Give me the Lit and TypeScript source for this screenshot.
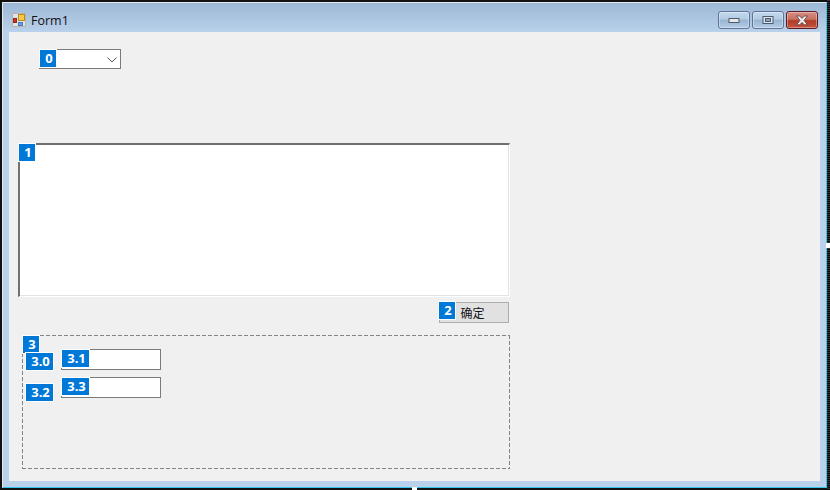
import { LitElement, html, css } from "lit";
import { customElement } from "lit/decorators.js";

@customElement("app-badge")
export class Badge extends LitElement {
  static styles = css`
    :host {
      position: absolute;
      box-sizing: border-box;
      display: flex;
      align-items: center;
      justify-content: center;
      height: 19px;
      min-width: 18px;
      padding-left: 2px;
      background: #0078d7;
      border: 1px solid #fff;
      color: #fff;
      font: 700 13px "Open Sans", "Noto Sans", sans-serif;
      line-height: 1;
      z-index: 2;
    }
  `;

  render() {
    return html`<slot></slot>`;
  }
}

@customElement("app-root")
export class AppRoot extends LitElement {
  static styles = css`
    :host {
      display: block;
      position: relative;
      width: 830px;
      height: 490px;
      overflow: hidden;
      background: #111;
      font-family: "Open Sans", "Noto Sans", sans-serif;
    }

    .window {
      box-sizing: border-box;
      width: 825px;
      height: 486px;
      margin: 2px 0 0 2px;
      display: flex;
      flex-direction: column;
      background: #b9d1ea;
      border-top: 1px solid #e4e9ee;
      border-left: 1px solid #e4e9ee;
      border-right: 1px solid #35c6ee;
      border-bottom: 1px solid #35c6ee;
    }

    .titlebar {
      height: 29px;
      flex: none;
      box-sizing: border-box;
      display: flex;
      align-items: center;
      padding: 0 8px 0 9px;
      background: linear-gradient(#9db8d5, #b9d1ea);
    }

    .titlebar svg.app {
      flex: none;
      margin: 5px 5px 0 0;
    }

    .title {
      flex: 1;
      font-size: 12.5px;
      color: #111;
      margin-top: 5px;
    }

    .controls {
      display: flex;
      gap: 2px;
      margin-top: 5px;
    }

    .caption {
      box-sizing: border-box;
      width: 32px;
      height: 18px;
      display: flex;
      align-items: center;
      justify-content: center;
      border: 1px solid #5f7396;
      border-radius: 3px;
      background: linear-gradient(#c5d8ec 0%, #b3cbe4 45%, #98b4d2 50%, #b4cde6 100%);
      box-shadow: inset 0 0 0 1px rgba(255, 255, 255, 0.35);
    }

    .caption.close {
      border-color: #5b1a26;
      background: linear-gradient(#d78f82 0%, #c8705f 45%, #b13a26 55%, #c4563f 100%);
    }

    .client {
      box-sizing: border-box;
      width: 811px;
      height: 449px;
      margin-left: 6px;
      background: #f0f0f0;
      display: flex;
      flex-direction: column;
      align-items: flex-start;
      padding-top: 17px;
    }

    .combo {
      position: relative;
      box-sizing: border-box;
      width: 82px;
      height: 20px;
      margin-left: 30px;
      background: #fff;
      border: 1px solid #7a7a7a;
      display: flex;
      align-items: center;
      justify-content: flex-end;
      padding-right: 3px;
    }

    .combo app-badge {
      left: -1px;
      top: -1px;
    }

    .rich {
      position: relative;
      box-sizing: border-box;
      width: 492px;
      height: 154px;
      margin: 74px 0 0 9px;
      background: #fff;
      border-top: 2px solid #707070;
      border-left: 2px solid #707070;
      border-right: 1px solid #fff;
      border-bottom: 1px solid #fff;
      box-shadow: inset -1px -1px 0 #e3e3e3;
    }

    .rich app-badge {
      left: -2px;
      top: -2px;
    }

    .button {
      position: relative;
      box-sizing: border-box;
      width: 70px;
      height: 21px;
      margin: 5px 0 0 430px;
      background: #e1e1e1;
      border: 1px solid #adadad;
      display: flex;
      align-items: center;
      justify-content: center;
      font: 12px "Noto Sans CJK SC", sans-serif;
      color: #111;
    }

    .button span {
      margin-left: -3px;
    }

    .button app-badge {
      left: -2px;
      top: -2px;
    }

    .group {
      position: relative;
      box-sizing: border-box;
      width: 488px;
      height: 134px;
      margin: 12px 0 0 13px;
      padding: 14px 0 0 39px;
      display: flex;
      flex-direction: column;
      gap: 7px;
      background:
        repeating-linear-gradient(90deg, #858585 0 4px, transparent 4px 6px) top / 100% 1px no-repeat,
        repeating-linear-gradient(90deg, #858585 0 4px, transparent 4px 6px) bottom / 100% 1px no-repeat,
        repeating-linear-gradient(180deg, #858585 0 4px, transparent 4px 6px) left / 1px 100% no-repeat,
        repeating-linear-gradient(180deg, #858585 0 4px, transparent 4px 6px) right / 1px 100% no-repeat;
    }

    .group > app-badge {
      left: 0;
      top: 0;
    }

    .group > app-badge.b30 {
      left: 3px;
      top: 17px;
    }

    .group > app-badge.b32 {
      left: 3px;
      top: 48px;
    }

    .textbox {
      position: relative;
      box-sizing: border-box;
      width: 100px;
      height: 21px;
      background: #fff;
      border: 1px solid #7a7a7a;
    }

    .textbox app-badge {
      left: -1px;
      top: -1px;
    }

    .wide {
      min-width: 29px;
    }

    .edge {
      position: absolute;
      top: 0;
      bottom: 0;
      right: 0;
      width: 3px;
      background: repeating-linear-gradient(180deg, #333 0 1px, #0a0a0a 1px 2px);
    }

    .handle {
      position: absolute;
      background: #fff;
    }

    .handle.r {
      right: 0;
      top: 243px;
      width: 4px;
      height: 5px;
    }

    .handle.b {
      left: 412px;
      bottom: 0;
      width: 5px;
      height: 3px;
    }
  `;

  render() {
    return html`
      <div class="window">
        <div class="titlebar">
          <svg class="app" width="14" height="14" viewBox="0 0 14 14">
            <rect x="0.5" y="0.5" width="13" height="13" fill="#dfe3e6" stroke="#b9b3aa" />
            <rect x="6.5" y="1.5" width="6" height="6" fill="#f4cb45" stroke="#b98a1e" />
            <rect x="1.5" y="5.5" width="3" height="4" fill="#d0322a" stroke="#8a2a24" />
            <rect x="6.5" y="9.5" width="4" height="3" fill="#6aa0e4" stroke="#4a78bc" />
          </svg>
          <span class="title">Form1</span>
          <div class="controls">
            <div class="caption">
              <svg width="12" height="7" viewBox="0 0 12 7">
                <rect x="1" y="1.5" width="10" height="4" fill="#e8e8e8" stroke="#4f5b6e" />
              </svg>
            </div>
            <div class="caption">
              <svg width="12" height="8" viewBox="0 0 12 8">
                <rect x="1" y="0.5" width="10" height="7" fill="#dfe6ee" stroke="#4f5b6e" />
                <rect x="3.5" y="2.5" width="5" height="3" fill="#8aa6c4" stroke="#4f5b6e" />
              </svg>
            </div>
            <div class="caption close">
              <svg width="14" height="11" viewBox="0 0 14 11">
                <path
                  d="M1.5 1h3.2L7 3.4 9.3 1h3.2L9 5.4l3.5 4.4H9.3L7 7.4 4.7 9.8H1.5L5 5.4z"
                  fill="#eeeeee"
                  stroke="#5a3a3a"
                  stroke-width="0.8"
                />
              </svg>
            </div>
          </div>
        </div>
        <div class="client">
          <div class="combo">
            <app-badge>0</app-badge>
            <svg width="10" height="7" viewBox="0 0 10 7">
              <path d="M0.5 1.5l4.5 4.5 4.5-4.5" fill="none" stroke="#555" stroke-width="1" />
            </svg>
          </div>
          <div class="rich"><app-badge>1</app-badge></div>
          <div class="button"><app-badge>2</app-badge><span>确定</span></div>
          <div class="group">
            <app-badge>3</app-badge>
            <app-badge class="wide b30">3.0</app-badge>
            <app-badge class="wide b32">3.2</app-badge>
            <div class="textbox"><app-badge class="wide">3.1</app-badge></div>
            <div class="textbox"><app-badge class="wide">3.3</app-badge></div>
          </div>
        </div>
      </div>
      <span class="edge"></span>
      <span class="handle r"></span>
      <span class="handle b"></span>
    `;
  }
}
